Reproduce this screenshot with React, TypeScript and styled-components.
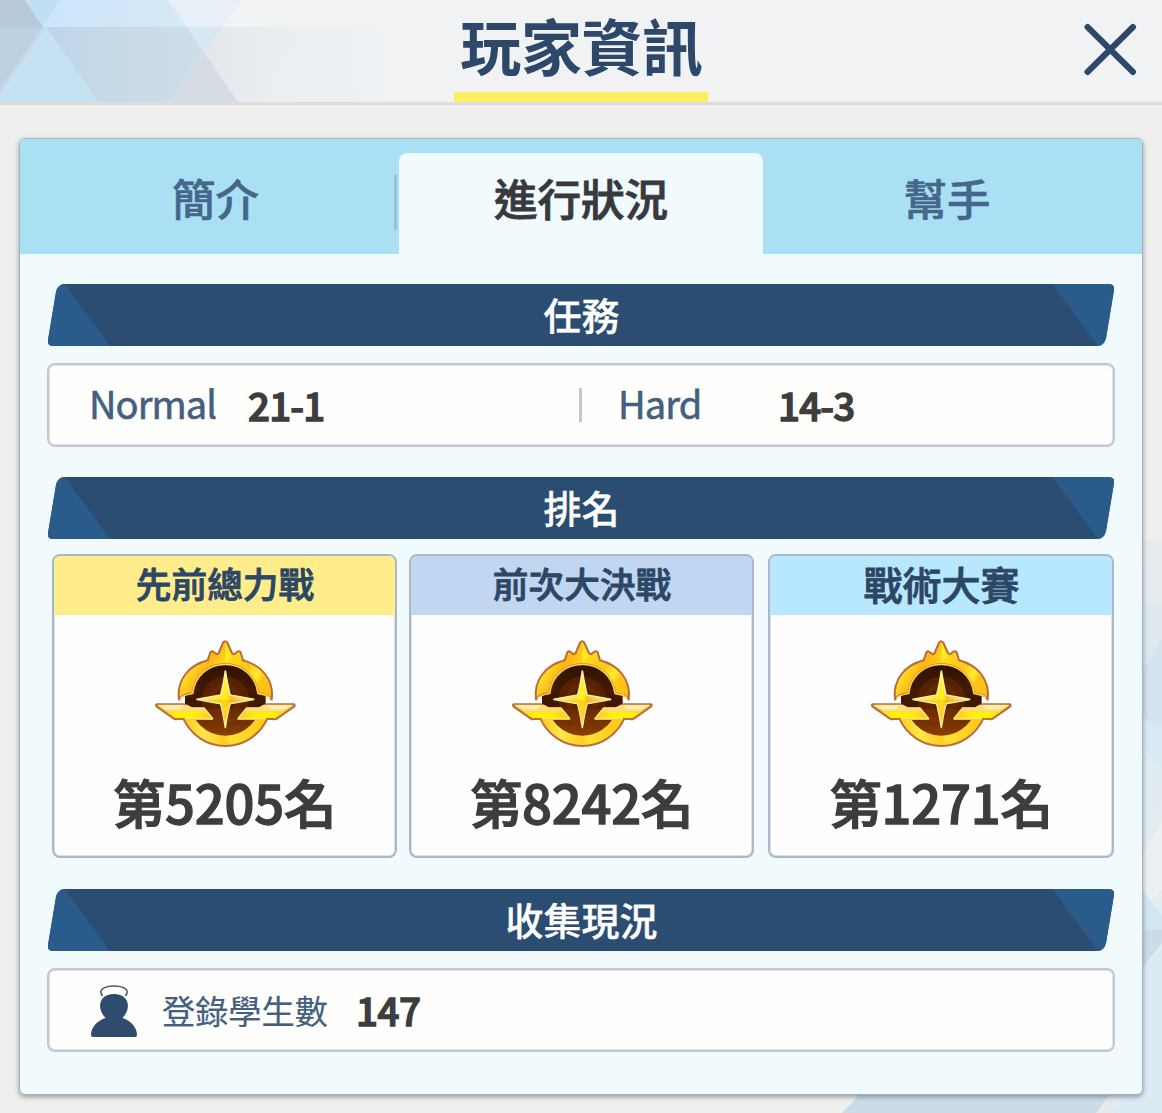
import React from 'react';
import styled, { createGlobalStyle } from 'styled-components';

const GlobalStyle = createGlobalStyle`
  * { box-sizing: border-box; }
  body { margin: 0; background: #efefed; font-family: "Noto Sans CJK TC", "Noto Sans", sans-serif; }
`;

const Page = styled.main`
  position: relative;
  isolation: isolate;
  width: 1162px;
  height: 1113px;
  overflow: hidden;
  background: #efefed;
`;

const Header = styled.header`
  position: relative;
  display: flex;
  justify-content: center;
  height: 105px;
  background: #f0f2f4;
  border-bottom: 3px solid #dddddc;
`;

const HeaderPattern = styled.svg`
  position: absolute;
  z-index: 0;
  left: 0;
  top: 0;
`;

const BackPattern = styled.svg`
  position: absolute;
  z-index: -1;
  right: 0;
  bottom: 0;
`;

const Title = styled.h1`
  position: relative;
  width: 254px;
  height: 102px;
  margin: 0;
  padding: 4px 0 0 1px;
  border-bottom: 10px solid #fdee60;
  color: #2d4868;
  font-size: 61px;
  font-weight: 700;
  line-height: 82px;
  text-align: center;
  letter-spacing: -0.4px;
`;

const CloseButton = styled.button`
  position: absolute;
  right: 25px;
  top: 23px;
  width: 54px;
  height: 54px;
  padding: 0;
  border: 0;
  background: none;
  svg { display: block; }
`;

const Panel = styled.section`
  margin: 33px 19px 0;
  height: 957px;
  border: 1px solid #9fb5c2;
  border-radius: 6px;
  overflow: hidden;
  background: #f1fafd;
  box-shadow: 0 2px 5px rgba(60, 75, 85, 0.5);
`;

const Tabs = styled.nav`
  display: grid;
  grid-template-columns: 379px 364px 379px;
  align-items: end;
  height: 115px;
  background: #a9e0f4;
`;

const Tab = styled.button<{ $active?: boolean; $divider?: boolean }>`
  position: relative;
  height: 101px;
  padding: ${p => (p.$active ? '0 0 11px' : p.$divider ? '0 0 11px 12px' : '0 11px 11px 0')};
  border: 0;
  border-radius: 8px 8px 0 0;
  background: ${p => (p.$active ? '#f1fafd' : 'transparent')};
  color: ${p => (p.$active ? '#38393d' : '#45678b')};
  font: 500 43.5px/1.4 "Noto Sans CJK TC", sans-serif;
  -webkit-text-stroke: ${p => (p.$active ? '0.9px #38393d' : '0.6px #45678b')};
  &::after {
    content: '';
    display: ${p => (p.$divider ? 'block' : 'none')};
    position: absolute;
    right: 2px;
    top: 22px;
    width: 3px;
    height: 55px;
    background: #9bc2da;
  }
`;

const Content = styled.div`
  display: flex;
  flex-direction: column;
  padding: 30px 28px 0;
`;

const Banner = styled.h2<{ $top?: number }>`
  width: 1066px;
  height: 62px;
  margin: ${p => p.$top ?? 0}px 0 0;
  clip-path: path('M17 0 H1060 Q1067 0 1066 6 L1058 54 Q1056 62 1049 62 H5 Q-1 62 0 56 L8 8 Q10 0 17 0Z');
  background:
    linear-gradient(53.7deg, #295c8a 0 50%, transparent 50.5%) 16px 0 / 46px 62px no-repeat,
    linear-gradient(#295c8a, #295c8a) 0 0 / 16px 62px no-repeat,
    linear-gradient(53.7deg, transparent 50%, #295c8a 50.5%) 1004px 0 / 46px 62px no-repeat,
    linear-gradient(#295c8a, #295c8a) 1050px 0 / 16px 62px no-repeat,
    #2c4d72;
  color: #fff;
  padding-left: 1px;
  font-size: 38px;
  font-weight: 500;
  line-height: 59px;
  text-align: center;
  -webkit-text-stroke: 0.35px #fff;
`;

const InfoBox = styled.div`
  display: flex;
  align-items: center;
  width: 1068px;
  height: 84px;
  margin-top: 17px;
  margin-left: -1px;
  padding-left: 40px;
  border: 2px solid #c1c8d4;
  border-radius: 8px;
  background: #fefefd;
  box-shadow: inset 0 0 0 1px #dfe3e9;
`;

const Label = styled.span<{ $width: number; $size: number; $tight?: boolean }>`
  width: ${p => p.$width}px;
  color: #43607f;
  font-size: ${p => p.$size}px;
  line-height: 60px;
  white-space: nowrap;
  letter-spacing: ${p => (p.$tight ? '-0.9px' : '0')};
  margin-top: ${p => (p.$tight ? '-4px' : '0')};
  -webkit-text-stroke: ${p => (p.$tight ? '0.6px' : '0.2px')} #43607f;
`;

const Value = styled.strong<{ $width?: number; $spacing?: number }>`
  width: ${p => (p.$width ? p.$width + 'px' : 'auto')};
  color: #3d3d3d;
  font-size: 38.5px;
  line-height: 60px;
  font-weight: 500;
  letter-spacing: ${p => p.$spacing ?? -0.8}px;
  margin-top: -3px;
  -webkit-text-stroke: 1.4px #3d3d3d;
`;

const Divider = styled.i`
  width: 3px;
  height: 34px;
  margin-right: 36px;
  background: #c1c8cf;
`;

const Cards = styled.div`
  display: flex;
  margin: 15px 0 0 4px;
`;

const Card = styled.article<{ $gap?: number; $width: number }>`
  display: flex;
  flex-direction: column;
  align-items: center;
  width: ${p => p.$width}px;
  height: 304px;
  margin-right: ${p => p.$gap ?? 0}px;
  border: 2px solid #aab7c8;
  border-radius: 8px;
  overflow: hidden;
  background: #fefefe;
  box-shadow: inset 0 0 0 1px #dbe1e8;
`;

const CardTitle = styled.h3<{ $color: string; $size: number }>`
  width: 100%;
  height: 59px;
  margin: 0;
  padding-left: 1px;
  background: ${p => p.$color};
  color: #2c4765;
  font-size: ${p => p.$size}px;
  font-weight: 500;
  line-height: 54px;
  text-align: center;
  -webkit-text-stroke: 0.8px #2c4765;
`;

const Emblem = styled.svg`
  width: 170px;
  height: 135px;
  margin-top: 10px;
  flex: none;
`;

const Rank = styled.strong`
  color: #3d3d3d;
  font-size: 52.5px;
  font-weight: 500;
  line-height: 76px;
  margin-top: 3px;
  letter-spacing: -0.2px;
  white-space: nowrap;
  -webkit-text-stroke: 1.3px #3d3d3d;
`;

const StudentIcon = styled.svg`
  width: 46px;
  height: 52px;
  margin: 2px 25px 0 2px;
`;

function Wing({ fill }: { fill: string }) {
  return (
    <>
      <path d="M51 238 H133 L155 250 H192 L217 281 H132 L105 283 L50 245 Q45 239 51 238Z" fill="#ffc928" stroke="#b96c3c" strokeWidth="6" strokeLinejoin="round" />
      <path d="M138 241 L155 250 H192 L217 281 H134" fill="none" stroke="#ffe36b" strokeWidth="6" strokeLinejoin="round" />
      <path d="M53 239 H133 L155 250 H190 L198 260 H84Z" fill="#ffdc78" />
      <path d="M54 241 H134 L120 253 H76Z" fill="#fff0b0" />
      <path d="M80 261 H197 L214 279 H107Z" fill={fill} />
    </>
  );
}

function RankEmblem({ id }: { id: string }) {
  const g = (n: string) => `url(#${id}-${n})`;
  return (
    <Emblem viewBox="0 0 510 405" aria-hidden="true">
      <defs>
        <linearGradient id={`${id}-gold`} x1="0" x2="1" y1="0" y2="0.35">
          <stop offset="0" stopColor="#ffd52a" />
          <stop offset="0.18" stopColor="#ffee2b" />
          <stop offset="0.4" stopColor="#fdb716" />
          <stop offset="0.58" stopColor="#ffd81b" />
          <stop offset="0.8" stopColor="#fdc61b" />
          <stop offset="0.92" stopColor="#fff02c" />
          <stop offset="1" stopColor="#ffc219" />
        </linearGradient>
        <linearGradient id={`${id}-low`}>
          <stop offset="0" stopColor="#ffc91d" />
          <stop offset="0.25" stopColor="#ffe84a" />
          <stop offset="0.5" stopColor="#ffcb20" />
          <stop offset="0.56" stopColor="#ffe233" />
          <stop offset="1" stopColor="#ffc414" />
        </linearGradient>
        <linearGradient id={`${id}-dark`} x2="0" y2="1">
          <stop offset="0" stopColor="#301200" />
          <stop offset="0.5" stopColor="#4a1d00" />
          <stop offset="1" stopColor="#8c3f00" />
        </linearGradient>
        <linearGradient id={`${id}-star`}>
          <stop offset="0" stopColor="#fff1ab" />
          <stop offset="0.4" stopColor="#ffe82a" />
          <stop offset="0.52" stopColor="#fff11d" />
          <stop offset="0.6" stopColor="#fdbd24" />
          <stop offset="1" stopColor="#fff4bd" />
        </linearGradient>
        <linearGradient id={`${id}-wing`}>
          <stop offset="0" stopColor="#ffd61f" />
          <stop offset="0.25" stopColor="#fff500" />
          <stop offset="0.65" stopColor="#ffee08" />
          <stop offset="1" stopColor="#ffc624" />
        </linearGradient>
      </defs>
      <path d="M130 281 A139 142 0 0 0 382 281 L340 278 H172Z" fill={g('low')} stroke="#b96c3c" strokeWidth="6" strokeLinejoin="round" />
      <circle cx="256" cy="225" r="107" fill={g('dark')} />
      <path d="M135 200 H377 V238 L355 252 H157 L135 238Z" fill="#401800" />
      <circle cx="256" cy="225" r="71" fill="#8c3900" opacity=".32" />
      <circle cx="256" cy="225" r="50" fill="#743000" opacity=".4" />
      <circle cx="256" cy="225" r="32" fill="#341300" opacity=".4" />
      <path d="M117 224 C109 162 149 120 203 106 L211 82 Q215 76 220 80 L230 88 L236 84 L249 53 Q255 45 262 53 L276 84 L282 88 L292 80 Q298 77 302 82 L309 106 C363 120 403 162 395 224 Q389 212 378 210 L354 205 C348 154 308 118 256 118 C204 118 163 154 158 205 Q124 208 117 224Z" fill={g('gold')} stroke="#b96c3c" strokeWidth="6" strokeLinejoin="round" />
      <path d="M121 220 Q128 210 158 205 C163 154 204 118 256 118 S348 154 354 205 L376 210 Q386 212 391 220" fill="none" stroke="#ffdb45" strokeWidth="4" />
      <path d="M256 52 L274 92 L256 116Z" fill="#ffea24" />
      <Wing fill={g('wing')} />
      <g transform="matrix(-1 0 0 1 512 0)">
        <Wing fill={g('wing')} />
      </g>
      <path d="M256 138 Q263 181 270 210 L341 223 L270 236 Q262 266 256 307 Q250 266 242 236 L171 223 L242 210 Q250 181 256 138Z" fill={g('star')} stroke="#fff0a0" strokeWidth="5" strokeLinejoin="round" />
      <path d="M175 224 H337 L270 235 L256 300 L242 235Z" fill="#f5ae19" opacity=".42" />
    </Emblem>
  );
}

const ranks = [
  { id: 'raid', title: '先前總力戰', rank: '第5205名', color: '#feed8a', size: 35.7, gap: 12, width: 345 },
  { id: 'grand', title: '前次大決戰', rank: '第8242名', color: '#c1d6f1', size: 35.7, gap: 14, width: 345 },
  { id: 'tactical', title: '戰術大賽', rank: '第1271名', color: '#b8e8ff', size: 39, gap: 0, width: 346 },
];

export default function App() {
  return (
    <>
      <GlobalStyle />
      <Page>
        <BackPattern width="320" height="573" viewBox="842 540 320 573" aria-hidden="true">
          <defs>
            <linearGradient id="side" x2="0" y2="1">
              <stop offset="0" stopColor="#e8ebed" />
              <stop offset="0.35" stopColor="#e0ebf1" />
              <stop offset="1" stopColor="#e8eef1" />
            </linearGradient>
          </defs>
          <path d="M1130 540 H1162 V1113 H1080 V1040Z" fill="url(#side)" />
          <path d="M1130 602 H1162 V725 H1150 L1130 700Z" fill="#dee8ee" />
          <path d="M1130 690 L1162 640 V725 H1150 L1130 700Z" fill="#d4e3ed" />
          <path d="M1130 700 L1150 725 H1162 V767 H1158 L1130 728Z" fill="#d8eaf5" />
          <path d="M1130 875 L1162 822 V890 L1140 915Z" fill="#edf0f2" />
          <path d="M1130 875 L1162 915 V930 H1130Z" fill="#d2e6f3" />
          <path d="M1130 930 H1162 V943 L1130 984Z" fill="#cbdce8" />
          <path d="M1130 986 L1162 946 V1113 H1080Z" fill="#dceaf4" />
          <path d="M842 1113 L864 1090 H1115 L1096 1113Z" fill="#c9dce7" />
          <path d="M1096 1113 L1120 1080 H1136 L1113 1113Z" fill="#e5eaed" />
        </BackPattern>
        <Header>
          <HeaderPattern width="400" height="102" viewBox="0 0 400 102" aria-hidden="true">
            <defs>
              <linearGradient id="low"><stop offset="0" stopColor="#bcd4ed" /><stop offset=".3" stopColor="#c5d8e7" /><stop offset="1" stopColor="#cedfe9" /></linearGradient>
              <linearGradient id="high"><stop offset="0" stopColor="#cce5fc" /><stop offset="1" stopColor="#d5e9f6" /></linearGradient>
              <linearGradient id="fade"><stop offset="0" stopColor="#e2e6eb" /><stop offset=".4" stopColor="#e9eef1" /><stop offset="1" stopColor="#f0f2f4" /></linearGradient>
            </defs>
            <path d="M187 27 H400 V102 H238Z" fill="url(#fade)" />
            <path d="M168 0 H242 L222 27 H187Z" fill="#e8eff7" />
            <path d="M242 0 H345 L326 27 H222Z" fill="#f1f3f4" />
            <path d="M308 27 L258 102 H361Z" fill="#ebf0f2" opacity=".65" />
            <path d="M0 0 H25 L43 27 H0Z" fill="#b8cad9" />
            <path d="M25 0 H61 L43 27Z" fill="#c1dff2" />
            <path d="M61 0 H168 L187 27 H43Z" fill="url(#high)" />
            <path d="M0 27 H43 L0 90Z" fill="#bbd1e1" />
            <path d="M42 27 H46 L0 96 V89Z" fill="#c9d8e5" />
            <path d="M46 27 L98 102 H0 V96Z" fill="#c5e1f4" />
            <path d="M46 27 H187 L204 52 L171 102 H98Z" fill="url(#low)" />
            <path d="M187 27 H222 L204 52Z" fill="#d7e8f5" />
            <path d="M204 52 L238 102 H171Z" fill="#d5dce4" />
          </HeaderPattern>
          <Title>玩家資訊</Title>
          <CloseButton aria-label="關閉">
            <svg width="54" height="54" viewBox="0 0 54 54">
              <path d="M4.500 4 L50 49 M50 4 L4.500 49" stroke="#2d4868" strokeWidth="6" strokeLinecap="round" />
            </svg>
          </CloseButton>
        </Header>
        <Panel>
          <Tabs>
            <Tab $divider>簡介</Tab>
            <Tab $active>進行狀況</Tab>
            <Tab>幫手</Tab>
          </Tabs>
          <Content>
            <Banner>任務</Banner>
            <InfoBox>
              <Label $width={159} $size={38} $tight>Normal</Label>
              <Value $width={331}>21-1</Value>
              <Divider />
              <Label $width={160} $size={38} $tight>Hard</Label>
              <Value>14-3</Value>
            </InfoBox>
            <Banner $top={30}>排名</Banner>
            <Cards>
              {ranks.map(r => (
                <Card key={r.id} $gap={r.gap} $width={r.width}>
                  <CardTitle $color={r.color} $size={r.size}>{r.title}</CardTitle>
                  <RankEmblem id={r.id} />
                  <Rank>{r.rank}</Rank>
                </Card>
              ))}
            </Cards>
            <Banner $top={31}>收集現況</Banner>
            <InfoBox>
              <StudentIcon viewBox="0 0 46 52" aria-hidden="true">
                <path d="M11.500 11 C6 4 15 1 23 1 S40 4 34.500 11" fill="none" stroke="#51576a" strokeWidth="1.6" />
                <path d="M14.500 33 C5 23 8 9 23 9 S41 23 31.500 33 C39 35 46 42 46 50 Q46 52 44 52 H2 Q0 52 0 50 C0 42 7 35 14.500 33Z" fill="#304c6c" />
              </StudentIcon>
              <Label $width={194} $size={33.2}>登錄學生數</Label>
              <Value $spacing={-0.5}>147</Value>
            </InfoBox>
          </Content>
        </Panel>
      </Page>
    </>
  );
}
